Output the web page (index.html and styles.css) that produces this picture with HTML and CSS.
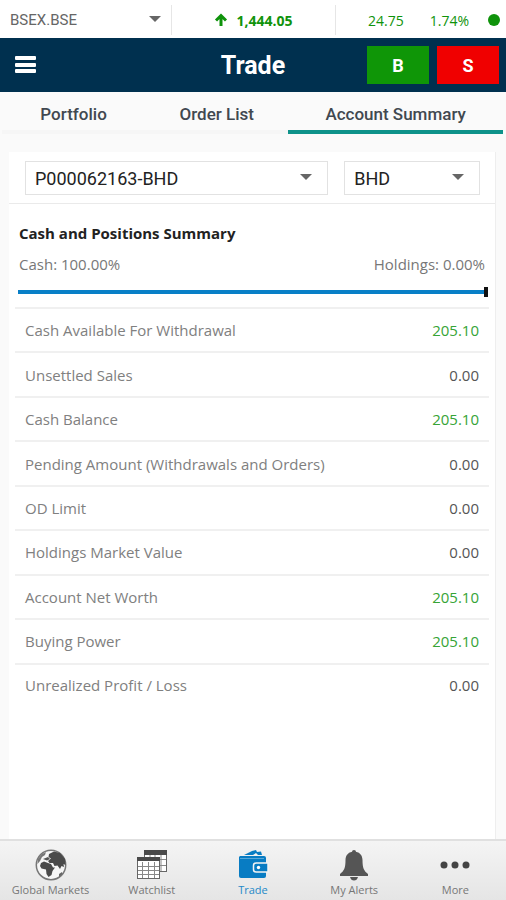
FILE: index.html
```html
<!DOCTYPE html>
<html lang="en">

<head>
  <meta charset="UTF-8">
  <meta name="viewport" content="width=device-width, initial-scale=1.0">
  <title>Trade</title>
  <link rel="stylesheet" href="styles.css">
</head>

<body>
<div class="ticker">
  <div class="select_box ticker_symbol">
    <select aria-label="Symbol">
      <option>BSEX.BSE</option>
    </select>
  </div>
  <div class="ticker_price">
    <svg width="14" height="14" viewBox="0 0 14 14" aria-hidden="true">
      <path d="M7 13V3M2 7.500L7 2.500L12 7.500" fill="none" stroke="#0f930b" stroke-width="3"/>
    </svg>
    <span>1,444.05</span>
  </div>
  <div class="ticker_change">
    <span>24.75</span>
    <span>1.74%</span>
    <span class="status_dot"></span>
  </div>
</div>

<header class="header">
  <button class="menu_button" aria-label="Menu">
    <svg width="22" height="18" viewBox="0 0 22 18" fill="#fff" aria-hidden="true">
      <rect x="0" y="0" width="21" height="4" rx="1"/>
      <rect x="0" y="7" width="21" height="4" rx="1"/>
      <rect x="0" y="13" width="21" height="4" rx="1"/>
    </svg>
  </button>
  <h1>Trade</h1>
  <div class="header_actions">
    <button class="buy">B</button>
    <button class="sell">S</button>
  </div>
</header>

<nav class="tabs">
  <a href="#">Portfolio</a>
  <a href="#">Order List</a>
  <a href="#" class="active">Account Summary</a>
</nav>

<main class="card">
  <div class="filters">
    <div class="select_box filter">
      <select aria-label="Account">
        <option>P000062163-BHD</option>
      </select>
    </div>
    <div class="select_box filter">
      <select aria-label="Currency">
        <option>BHD</option>
      </select>
    </div>
  </div>

  <div class="summary">
    <h2>Cash and Positions Summary</h2>
    <div class="summary_split">
      <span>Cash: 100.00%</span>
      <span>Holdings: 0.00%</span>
    </div>
    <div class="bar">
      <div class="bar_fill" style="width: 100%"></div>
    </div>

    <table class="positions">
      <tr><th scope="row">Cash Available For Withdrawal</th><td class="positive">205.10</td></tr>
      <tr><th scope="row">Unsettled Sales</th><td>0.00</td></tr>
      <tr><th scope="row">Cash Balance</th><td class="positive">205.10</td></tr>
      <tr><th scope="row">Pending Amount (Withdrawals and Orders)</th><td>0.00</td></tr>
      <tr><th scope="row">OD Limit</th><td>0.00</td></tr>
      <tr><th scope="row">Holdings Market Value</th><td>0.00</td></tr>
      <tr><th scope="row">Account Net Worth</th><td class="positive">205.10</td></tr>
      <tr><th scope="row">Buying Power</th><td class="positive">205.10</td></tr>
      <tr><th scope="row">Unrealized Profit / Loss</th><td>0.00</td></tr>
    </table>
  </div>
</main>

<nav class="bottom_nav">
  <a href="#">
    <svg width="32" height="32" viewBox="0 0 32 32" aria-hidden="true">
      <circle cx="16" cy="16" r="14.700" fill="#f6f6f6" stroke="#777" stroke-width="1.500"/>
      <path d="M14 5L19 2.500L25 4L30 10L30.500 16L28.500 15L29 18L26.500 17L25 20L22.500 16.500L19.500 17L18 14L14.500 14L13 12L16 9.500L13.500 8Z" fill="#4a4a4a"/>
      <path d="M6 14L9 12.500L13 14L16 15L18 18.500H20L17.500 22L16.500 26L13.500 28L11.500 25L11 20.500L6.500 19.500L5 17Z" fill="#4a4a4a"/>
      <path d="M3 10L7 5L11 3L10 6L7 8L5 12L2.500 15Z" fill="#777"/>
      <path d="M24 25L27 23L27.500 25L24 28Z" fill="#666"/>
      <path d="M8 10L13 8L15 10L12 11.500Z" fill="#555"/>
    </svg>
    <span>Global Markets</span>
  </a>
  <a href="#">
    <svg width="32" height="32" viewBox="0 0 32 32" aria-hidden="true">
      <rect x="8.500" y="1.500" width="22" height="21" fill="#fff" stroke="#666"/>
      <path d="M8 1H31V6H8Z" fill="#4a4a4a"/>
      <path d="M14 6V22M19 6V22M25 6V22M9 10.500H30M9 16.500H30" stroke="#888"/>
      <rect x="1.500" y="8.500" width="22" height="21" fill="#fff" stroke="#666"/>
      <path d="M1 8H24V12H1Z" fill="#4a4a4a"/>
      <path d="M6.500 13V29M12.500 13V29M18.500 13V29M2 17.500H23M2 21.500H23M2 25.500H23" stroke="#888"/>
    </svg>
    <span>Watchlist</span>
  </a>
  <a href="#" class="active">
    <svg width="32" height="32" viewBox="0 0 32 32" fill="#087cc3" aria-hidden="true">
      <path d="M7 6L15 2L19 1L20 3L24 2.500L25 6H21L19 4L16 6Z"/>
      <path d="M3 7H27Q29 7 29 9V27Q29 29 27 29H4Q2 29 2 27V8Z"/>
      <path d="M3 9.500H27" stroke="#58a8d8"/>
      <path d="M19 14H31V23H19Q16.500 23 16.500 20.500V16.500Q16.500 14 19 14Z" stroke="#f3f3f3" stroke-width="1.500"/>
      <circle cx="21.500" cy="18.500" r="1.700" fill="#fff"/>
    </svg>
    <span>Trade</span>
  </a>
  <a href="#">
    <svg width="32" height="32" viewBox="0 0 32 32" fill="#555" aria-hidden="true">
      <circle cx="16" cy="3" r="2"/>
      <path d="M16 2.500C21 2.500 24.500 6 24.500 11C24.500 19 26 22 30 25V27H2V25C6 22 7.500 19 7.500 11C7.500 6 11 2.500 16 2.500Z"/>
      <path d="M12 28H20Q19 31.500 16 31.500T12 28Z"/>
    </svg>
    <span>My Alerts</span>
  </a>
  <a href="#">
    <svg width="32" height="32" viewBox="0 0 32 32" fill="#444" aria-hidden="true">
      <circle cx="5" cy="16" r="3.500"/>
      <circle cx="16" cy="16" r="3.500"/>
      <circle cx="27" cy="16" r="3.500"/>
    </svg>
    <span>More</span>
  </a>
</nav>
</body>

</html>
```
FILE: styles.css
```css
* {
    box-sizing: border-box;
}

body {
    display: flex;
    flex-direction: column;
    min-height: 100vh;
    margin: 0;
    background-color: #fafafa;
    font-family: "Open Sans", "Noto Sans", sans-serif;
    color: #555;
}

a {
    text-decoration: none;
    color: inherit;
}

button {
    border: none;
    padding: 0;
    cursor: pointer;
}

/* select with its own arrow */
.select_box {
    position: relative;
}

.select_box select {
    width: 100%;
    height: 100%;
    padding: 0 32px 0 9px;
    border: none;
    background: none;
    appearance: none;
    font-family: Roboto, sans-serif;
    font-size: 18px;
    color: #222;
}

.select_box::after {
    content: "";
    position: absolute;
    top: 50%;
    right: 15px;
    margin-top: -4px;
    border: 6px solid transparent;
    border-top-color: #666;
    border-bottom: none;
    pointer-events: none;
}

.ticker {
    display: grid;
    grid-template-columns: 172fr 164fr 170fr;
    height: 38px;
    padding: 5px 0 3px;
    background-color: #fff;
    font-size: 14px;
    font-weight: 500;
    color: #0f930b;
}

.ticker_symbol,
.ticker_price {
    border-right: 1px solid #e6e6e6;
}

.ticker_symbol select {
    padding-left: 10px;
    font-size: 15px;
    color: #666;
}

.ticker_symbol::after {
    right: 10px;
}

.ticker_price {
    display: flex;
    align-items: center;
    justify-content: center;
    gap: 8px;
    font-weight: 700;
}

.ticker_change {
    display: flex;
    align-items: center;
    justify-content: flex-end;
    gap: 26px;
    padding-right: 6px;
}

.status_dot {
    width: 12px;
    height: 12px;
    margin-left: -7px;
    border-radius: 50%;
    background-color: #0f930b;
}

.header {
    display: grid;
    grid-template-columns: 1fr auto 1fr;
    align-items: center;
    height: 54px;
    padding: 0 7px;
    background-color: #00304f;
    font-family: Roboto, sans-serif;
    color: #fff;
}

.header h1 {
    margin: 0;
    font-size: 25px;
    font-weight: 700;
}

.menu_button {
    justify-self: start;
    display: flex;
    padding-left: 8px;
    background: none;
}

.header_actions {
    display: flex;
    justify-content: flex-end;
    gap: 8px;
}

.header_actions button {
    width: 62px;
    height: 38px;
    font-family: Roboto, sans-serif;
    font-size: 18px;
    font-weight: 700;
    color: #fff;
}

.header_actions .buy {
    background-color: #0f9607;
}

.header_actions .sell {
    background-color: #f00000;
}

.tabs {
    display: grid;
    grid-template-columns: 2fr 2fr 3fr;
    height: 42px;
    padding: 0 3px 0 2px;
    font-family: Roboto, sans-serif;
    font-size: 17px;
    font-weight: 500;
    color: #414850;
}

.tabs a {
    display: flex;
    align-items: center;
    justify-content: center;
    padding-top: 5px;
    border-bottom: 4px solid #f6f6f6;
}

.tabs .active {
    border-bottom-color: #0e928a;
}

.card {
    flex: 1;
    margin: 18px 10px 0 9px;
    border-right: 1px solid #eee;
    background-color: #fff;
}

.filters {
    display: grid;
    grid-template-columns: 304fr 136fr;
    gap: 16px;
    height: 52px;
    padding: 9px 15px 8px 16px;
    border-bottom: 1px solid #eaeaea;
}

.filter {
    border: 1px solid #e2e2e2;
}

.summary {
    padding: 17px 6px 0;
}

.summary h2 {
    margin: 0 4px;
    font-size: 15px;
    font-weight: 700;
    line-height: 24px;
    color: #222;
}

.summary_split {
    display: flex;
    justify-content: space-between;
    margin: 7px 4px 0;
    font-size: 15px;
    line-height: 24px;
    color: #777;
}

.bar {
    margin: 14px 1px 13px 3px;
}

.bar_fill {
    position: relative;
    height: 4px;
    background-color: #087fc7;
}

.bar_fill::after {
    content: "";
    position: absolute;
    top: -3px;
    right: 0;
    width: 4px;
    height: 10px;
    background-color: #111;
}

.positions {
    width: 100%;
    height: 399px;
    border-collapse: collapse;
    font-size: 15px;
}

.positions th,
.positions td {
    padding: 0 10px;
    border-top: 2px solid #f0f0f0;
    text-align: right;
    font-weight: 400;
}

.positions th {
    text-align: left;
    color: #808080;
}

.positions .positive {
    color: #36a436;
}

.bottom_nav {
    display: grid;
    grid-template-columns: repeat(5, 1fr);
    height: 61px;
    border-top: 2px solid #e0e0e0;
    background: linear-gradient(#f4f4f4, #e5e5e5);
    font-size: 11px;
    line-height: 18px;
    color: #777;
}

.bottom_nav a {
    display: flex;
    flex-direction: column;
    align-items: center;
    padding-top: 8px;
}

.bottom_nav .active {
    color: #2589c8;
}
```
